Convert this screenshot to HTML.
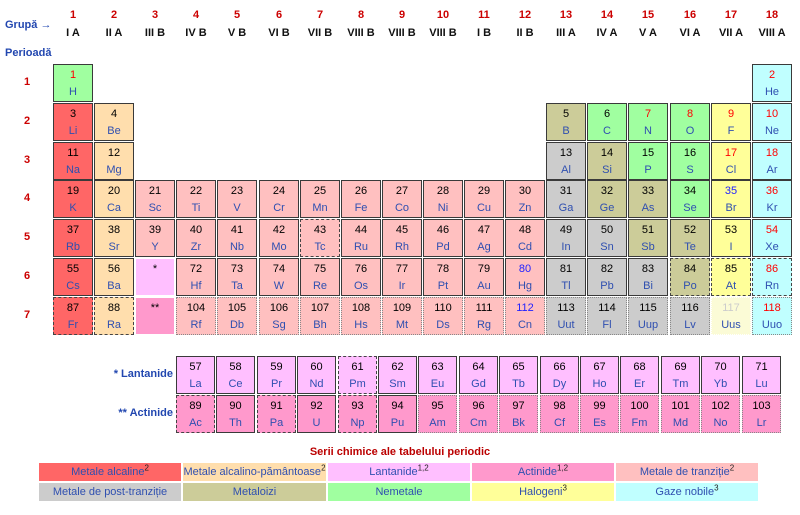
<!DOCTYPE html>
<html><head><meta charset="utf-8">
<style>
body{margin:0;width:800px;height:515px;background:#fff;position:relative;overflow:hidden;font-family:"Liberation Sans",Arial,sans-serif}
.e{position:absolute;width:40px;height:38px;box-sizing:border-box;border:1px solid #3a3a3a;text-align:center;font-size:11px;line-height:13px}
.e b{display:block;font-weight:normal;margin-top:4px;color:#000}
.e i{display:block;font-style:normal;color:#2f4fb0;margin-top:4px}
.l{width:39px}
.d{border:1px dashed #444}
.o{border:1px dotted #888}
.r b{color:#f00}.u b{color:#22f}
.A{background:#ff6666}.E{background:#ffdead}.L{background:#ffbfff}.C{background:#ff99cc}.T{background:#ffc0c0}.P{background:#cccccc}.M{background:#cccc99}.N{background:#a0ffa0}.H{background:#ffff99}.G{background:#c0ffff}
.g{position:absolute;width:40px;text-align:center;font-size:11px;font-weight:bold}
.gn{top:9px;color:#c00}.gr{top:27px;color:#111}
.p{position:absolute;left:18px;width:18px;text-align:center;font-size:11px;font-weight:bold;color:#c00}
.lb{position:absolute;font-size:11px;font-weight:bold;color:#2247b0}
.lg{position:absolute;height:18px;line-height:18px;text-align:center;font-size:11px;color:#2f4fb0}
.lg sup{font-size:8px;line-height:0;color:#222}
</style></head><body>
<div class="lb" style="left:5px;top:19px">Grupă →</div>
<div class="lb" style="left:5px;top:47px">Perioadă</div>
<div class="g gn" style="left:53px">1</div><div class="g gr" style="left:53px">I A</div>
<div class="g gn" style="left:94px">2</div><div class="g gr" style="left:94px">II A</div>
<div class="g gn" style="left:135px">3</div><div class="g gr" style="left:135px">III B</div>
<div class="g gn" style="left:176px">4</div><div class="g gr" style="left:176px">IV B</div>
<div class="g gn" style="left:217px">5</div><div class="g gr" style="left:217px">V B</div>
<div class="g gn" style="left:259px">6</div><div class="g gr" style="left:259px">VI B</div>
<div class="g gn" style="left:300px">7</div><div class="g gr" style="left:300px">VII B</div>
<div class="g gn" style="left:341px">8</div><div class="g gr" style="left:341px">VIII B</div>
<div class="g gn" style="left:382px">9</div><div class="g gr" style="left:382px">VIII B</div>
<div class="g gn" style="left:423px">10</div><div class="g gr" style="left:423px">VIII B</div>
<div class="g gn" style="left:464px">11</div><div class="g gr" style="left:464px">I B</div>
<div class="g gn" style="left:505px">12</div><div class="g gr" style="left:505px">II B</div>
<div class="g gn" style="left:546px">13</div><div class="g gr" style="left:546px">III A</div>
<div class="g gn" style="left:587px">14</div><div class="g gr" style="left:587px">IV A</div>
<div class="g gn" style="left:628px">15</div><div class="g gr" style="left:628px">V A</div>
<div class="g gn" style="left:670px">16</div><div class="g gr" style="left:670px">VI A</div>
<div class="g gn" style="left:711px">17</div><div class="g gr" style="left:711px">VII A</div>
<div class="g gn" style="left:752px">18</div><div class="g gr" style="left:752px">VIII A</div>

<div class="p" style="top:76px">1</div>
<div class="p" style="top:115px">2</div>
<div class="p" style="top:154px">3</div>
<div class="p" style="top:192px">4</div>
<div class="p" style="top:231px">5</div>
<div class="p" style="top:270px">6</div>
<div class="p" style="top:309px">7</div>

<!-- P1 -->
<div class="e N r" style="left:53px;top:64px"><b>1</b><i>H</i></div>
<div class="e G r" style="left:752px;top:64px"><b>2</b><i>He</i></div>
<!-- P2 -->
<div class="e A" style="left:53px;top:103px"><b>3</b><i>Li</i></div>
<div class="e E" style="left:94px;top:103px"><b>4</b><i>Be</i></div>
<div class="e M" style="left:546px;top:103px"><b>5</b><i>B</i></div>
<div class="e N" style="left:587px;top:103px"><b>6</b><i>C</i></div>
<div class="e N r" style="left:628px;top:103px"><b>7</b><i>N</i></div>
<div class="e N r" style="left:670px;top:103px"><b>8</b><i>O</i></div>
<div class="e H r" style="left:711px;top:103px"><b>9</b><i>F</i></div>
<div class="e G r" style="left:752px;top:103px"><b>10</b><i>Ne</i></div>
<!-- P3 -->
<div class="e A" style="left:53px;top:142px"><b>11</b><i>Na</i></div>
<div class="e E" style="left:94px;top:142px"><b>12</b><i>Mg</i></div>
<div class="e P" style="left:546px;top:142px"><b>13</b><i>Al</i></div>
<div class="e M" style="left:587px;top:142px"><b>14</b><i>Si</i></div>
<div class="e N" style="left:628px;top:142px"><b>15</b><i>P</i></div>
<div class="e N" style="left:670px;top:142px"><b>16</b><i>S</i></div>
<div class="e H r" style="left:711px;top:142px"><b>17</b><i>Cl</i></div>
<div class="e G r" style="left:752px;top:142px"><b>18</b><i>Ar</i></div>
<!-- P4 -->
<div class="e A" style="left:53px;top:180px"><b>19</b><i>K</i></div>
<div class="e E" style="left:94px;top:180px"><b>20</b><i>Ca</i></div>
<div class="e T" style="left:135px;top:180px"><b>21</b><i>Sc</i></div>
<div class="e T" style="left:176px;top:180px"><b>22</b><i>Ti</i></div>
<div class="e T" style="left:217px;top:180px"><b>23</b><i>V</i></div>
<div class="e T" style="left:259px;top:180px"><b>24</b><i>Cr</i></div>
<div class="e T" style="left:300px;top:180px"><b>25</b><i>Mn</i></div>
<div class="e T" style="left:341px;top:180px"><b>26</b><i>Fe</i></div>
<div class="e T" style="left:382px;top:180px"><b>27</b><i>Co</i></div>
<div class="e T" style="left:423px;top:180px"><b>28</b><i>Ni</i></div>
<div class="e T" style="left:464px;top:180px"><b>29</b><i>Cu</i></div>
<div class="e T" style="left:505px;top:180px"><b>30</b><i>Zn</i></div>
<div class="e P" style="left:546px;top:180px"><b>31</b><i>Ga</i></div>
<div class="e M" style="left:587px;top:180px"><b>32</b><i>Ge</i></div>
<div class="e M" style="left:628px;top:180px"><b>33</b><i>As</i></div>
<div class="e N" style="left:670px;top:180px"><b>34</b><i>Se</i></div>
<div class="e H u" style="left:711px;top:180px"><b>35</b><i>Br</i></div>
<div class="e G r" style="left:752px;top:180px"><b>36</b><i>Kr</i></div>
<!-- P5 -->
<div class="e A" style="left:53px;top:219px"><b>37</b><i>Rb</i></div>
<div class="e E" style="left:94px;top:219px"><b>38</b><i>Sr</i></div>
<div class="e T" style="left:135px;top:219px"><b>39</b><i>Y</i></div>
<div class="e T" style="left:176px;top:219px"><b>40</b><i>Zr</i></div>
<div class="e T" style="left:217px;top:219px"><b>41</b><i>Nb</i></div>
<div class="e T" style="left:259px;top:219px"><b>42</b><i>Mo</i></div>
<div class="e T d" style="left:300px;top:219px"><b>43</b><i>Tc</i></div>
<div class="e T" style="left:341px;top:219px"><b>44</b><i>Ru</i></div>
<div class="e T" style="left:382px;top:219px"><b>45</b><i>Rh</i></div>
<div class="e T" style="left:423px;top:219px"><b>46</b><i>Pd</i></div>
<div class="e T" style="left:464px;top:219px"><b>47</b><i>Ag</i></div>
<div class="e T" style="left:505px;top:219px"><b>48</b><i>Cd</i></div>
<div class="e P" style="left:546px;top:219px"><b>49</b><i>In</i></div>
<div class="e P" style="left:587px;top:219px"><b>50</b><i>Sn</i></div>
<div class="e M" style="left:628px;top:219px"><b>51</b><i>Sb</i></div>
<div class="e M" style="left:670px;top:219px"><b>52</b><i>Te</i></div>
<div class="e H" style="left:711px;top:219px"><b>53</b><i>I</i></div>
<div class="e G r" style="left:752px;top:219px"><b>54</b><i>Xe</i></div>
<!-- P6 -->
<div class="e A" style="left:53px;top:258px"><b>55</b><i>Cs</i></div>
<div class="e E" style="left:94px;top:258px"><b>56</b><i>Ba</i></div>
<div class="e L" style="left:135px;top:258px;border-color:#fff"><b>*</b></div>
<div class="e T" style="left:176px;top:258px"><b>72</b><i>Hf</i></div>
<div class="e T" style="left:217px;top:258px"><b>73</b><i>Ta</i></div>
<div class="e T" style="left:259px;top:258px"><b>74</b><i>W</i></div>
<div class="e T" style="left:300px;top:258px"><b>75</b><i>Re</i></div>
<div class="e T" style="left:341px;top:258px"><b>76</b><i>Os</i></div>
<div class="e T" style="left:382px;top:258px"><b>77</b><i>Ir</i></div>
<div class="e T" style="left:423px;top:258px"><b>78</b><i>Pt</i></div>
<div class="e T" style="left:464px;top:258px"><b>79</b><i>Au</i></div>
<div class="e T u" style="left:505px;top:258px"><b>80</b><i>Hg</i></div>
<div class="e P" style="left:546px;top:258px"><b>81</b><i>Tl</i></div>
<div class="e P" style="left:587px;top:258px"><b>82</b><i>Pb</i></div>
<div class="e P" style="left:628px;top:258px"><b>83</b><i>Bi</i></div>
<div class="e M d" style="left:670px;top:258px"><b>84</b><i>Po</i></div>
<div class="e H d" style="left:711px;top:258px"><b>85</b><i>At</i></div>
<div class="e G d r" style="left:752px;top:258px"><b>86</b><i>Rn</i></div>
<!-- P7 -->
<div class="e A d" style="left:53px;top:297px"><b>87</b><i>Fr</i></div>
<div class="e E d" style="left:94px;top:297px"><b>88</b><i>Ra</i></div>
<div class="e C" style="left:135px;top:297px;border-color:#fff"><b>**</b></div>
<div class="e T o" style="left:176px;top:297px"><b>104</b><i>Rf</i></div>
<div class="e T o" style="left:217px;top:297px"><b>105</b><i>Db</i></div>
<div class="e T o" style="left:259px;top:297px"><b>106</b><i>Sg</i></div>
<div class="e T o" style="left:300px;top:297px"><b>107</b><i>Bh</i></div>
<div class="e T o" style="left:341px;top:297px"><b>108</b><i>Hs</i></div>
<div class="e T o" style="left:382px;top:297px"><b>109</b><i>Mt</i></div>
<div class="e T o" style="left:423px;top:297px"><b>110</b><i>Ds</i></div>
<div class="e T o" style="left:464px;top:297px"><b>111</b><i>Rg</i></div>
<div class="e T o u" style="left:505px;top:297px"><b>112</b><i>Cn</i></div>
<div class="e P o" style="left:546px;top:297px"><b>113</b><i>Uut</i></div>
<div class="e P o" style="left:587px;top:297px"><b>114</b><i>Fl</i></div>
<div class="e P o" style="left:628px;top:297px"><b>115</b><i>Uup</i></div>
<div class="e P o" style="left:670px;top:297px"><b>116</b><i>Lv</i></div>
<div class="e o" style="left:711px;top:297px;background:#fbfbd6;border-color:#fff"><b style="color:#ccc">117</b><i>Uus</i></div>
<div class="e G o r" style="left:752px;top:297px"><b>118</b><i>Uuo</i></div>

<!-- f-block -->
<div class="lb" style="left:110px;top:368px;width:63px;text-align:right">* Lantanide</div>
<div class="lb" style="left:100px;top:407px;width:73px;text-align:right">** Actinide</div>
<div class="e l L" style="left:176px;top:356px"><b>57</b><i>La</i></div>
<div class="e l L" style="left:216px;top:356px"><b>58</b><i>Ce</i></div>
<div class="e l L" style="left:257px;top:356px"><b>59</b><i>Pr</i></div>
<div class="e l L" style="left:297px;top:356px"><b>60</b><i>Nd</i></div>
<div class="e l L d" style="left:338px;top:356px"><b>61</b><i>Pm</i></div>
<div class="e l L" style="left:378px;top:356px"><b>62</b><i>Sm</i></div>
<div class="e l L" style="left:418px;top:356px"><b>63</b><i>Eu</i></div>
<div class="e l L" style="left:459px;top:356px"><b>64</b><i>Gd</i></div>
<div class="e l L" style="left:499px;top:356px"><b>65</b><i>Tb</i></div>
<div class="e l L" style="left:540px;top:356px"><b>66</b><i>Dy</i></div>
<div class="e l L" style="left:580px;top:356px"><b>67</b><i>Ho</i></div>
<div class="e l L" style="left:620px;top:356px"><b>68</b><i>Er</i></div>
<div class="e l L" style="left:661px;top:356px"><b>69</b><i>Tm</i></div>
<div class="e l L" style="left:701px;top:356px"><b>70</b><i>Yb</i></div>
<div class="e l L" style="left:742px;top:356px"><b>71</b><i>Lu</i></div>
<div class="e l C d" style="left:176px;top:395px"><b>89</b><i>Ac</i></div>
<div class="e l C" style="left:216px;top:395px"><b>90</b><i>Th</i></div>
<div class="e l C d" style="left:257px;top:395px"><b>91</b><i>Pa</i></div>
<div class="e l C" style="left:297px;top:395px"><b>92</b><i>U</i></div>
<div class="e l C d" style="left:338px;top:395px"><b>93</b><i>Np</i></div>
<div class="e l C" style="left:378px;top:395px"><b>94</b><i>Pu</i></div>
<div class="e l C o" style="left:418px;top:395px"><b>95</b><i>Am</i></div>
<div class="e l C o" style="left:459px;top:395px"><b>96</b><i>Cm</i></div>
<div class="e l C o" style="left:499px;top:395px"><b>97</b><i>Bk</i></div>
<div class="e l C o" style="left:540px;top:395px"><b>98</b><i>Cf</i></div>
<div class="e l C o" style="left:580px;top:395px"><b>99</b><i>Es</i></div>
<div class="e l C o" style="left:620px;top:395px"><b>100</b><i>Fm</i></div>
<div class="e l C o" style="left:661px;top:395px"><b>101</b><i>Md</i></div>
<div class="e l C o" style="left:701px;top:395px"><b>102</b><i>No</i></div>
<div class="e l C o" style="left:742px;top:395px"><b>103</b><i>Lr</i></div>

<!-- legend -->
<div style="position:absolute;left:0;width:800px;top:446px;text-align:center;font-size:11px;font-weight:bold;color:#b00">Serii chimice ale tabelului periodic</div>
<div class="lg A" style="left:39px;top:463px;width:142px">Metale alcaline<sup>2</sup></div>
<div class="lg E" style="left:183px;top:463px;width:143px">Metale alcalino-pământoase<sup>2</sup></div>
<div class="lg L" style="left:328px;top:463px;width:142px">Lantanide<sup>1,2</sup></div>
<div class="lg C" style="left:472px;top:463px;width:142px">Actinide<sup>1,2</sup></div>
<div class="lg T" style="left:616px;top:463px;width:142px">Metale de tranziție<sup>2</sup></div>
<div class="lg P" style="left:39px;top:483px;width:142px">Metale de post-tranziție</div>
<div class="lg M" style="left:183px;top:483px;width:143px">Metaloizi</div>
<div class="lg N" style="left:328px;top:483px;width:142px">Nemetale</div>
<div class="lg H" style="left:472px;top:483px;width:142px">Halogeni<sup>3</sup></div>
<div class="lg G" style="left:616px;top:483px;width:142px">Gaze nobile<sup>3</sup></div>
</body></html>
